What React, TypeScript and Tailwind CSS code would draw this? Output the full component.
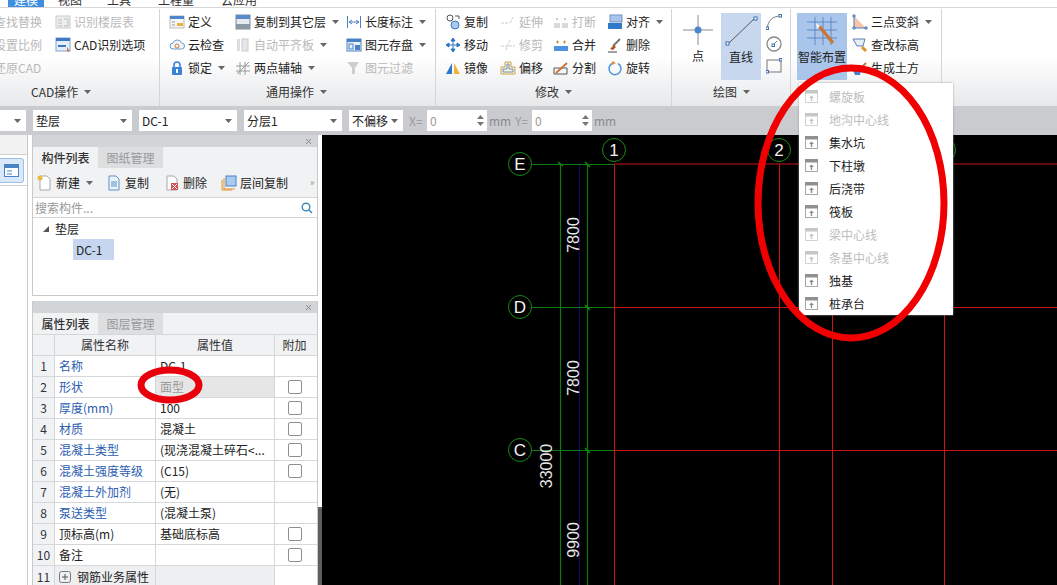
import React from 'react';

const Caret = ({ className = '' }: { className?: string }) => (
  <svg width="7" height="4" viewBox="0 0 7 4" className={`shrink-0 ${className}`}>
    <path d="M0 0h7L3.5 4z" fill="#666" />
  </svg>
);

const s16 = (children: React.ReactNode) => (
  <svg width="16" height="16" viewBox="0 0 16 16" fill="none">
    {children}
  </svg>
);

const icons: Record<string, React.ReactNode> = {
  blank: s16(<rect x="1" y="2" width="13" height="12" fill="#ddd" stroke="#ccc" />),
  layerTable: s16(<><rect x="1" y="2" width="14" height="12" fill="#eee" stroke="#ccc" /><path d="M3 6h4M3 9h4M3 12h4M9 5h4v7H9" stroke="#bbb" /></>),
  cadOption: s16(<><rect x="1" y="1" width="14" height="13" fill="#e4eef9" stroke="#7fa6d6" /><rect x="1" y="1" width="14" height="3" fill="#3f78c0" /><path d="M3 9h8" stroke="#3f78c0" strokeWidth="2" /><path d="M12 10l3 5-3-1z" fill="#e2622a" /></>),
  define: s16(<><rect x="1" y="2" width="14" height="12" fill="#f6f6f6" stroke="#b8b8b8" /><rect x="1" y="2" width="14" height="3" fill="#4e86cc" /><path d="M8 9h6v3H8z" fill="#e8b23c" /><path d="M3 8h3M3 11h3" stroke="#999" /></>),
  cloud: s16(<><path d="M4 12a3 3 0 0 1 0-6 4.5 4.5 0 0 1 8.500 0 3 3 0 0 1 0 6z" fill="#eef5fc" stroke="#6b9bd2" /><circle cx="8" cy="9" r="2" stroke="#e0792a" /></>),
  lock: s16(<><path d="M5 8V5a3 3 0 0 1 6 0v3" stroke="#3a82d8" strokeWidth="1.600" /><rect x="3" y="7" width="10" height="8" rx="1" fill="#3a82d8" /><rect x="7" y="9" width="2" height="4" fill="#fff" /></>),
  copyLayer: s16(<><rect x="1" y="1" width="14" height="14" fill="#e6e9ee" stroke="#7d8a9a" /><rect x="1" y="1" width="14" height="4" fill="#5a8bc8" /><rect x="1" y="10" width="14" height="5" fill="#8c97a6" /></>),
  alignAuto: s16(<><rect x="2" y="2" width="3" height="12" fill="#ddd" /><rect x="7" y="2" width="6" height="12" fill="#e6e6e6" stroke="#ccc" /></>),
  twoPoint: s16(<path d="M2 14L14 2M5 2v13M10 2v13M1 6h14M1 11h14" stroke="#999" />),
  length: s16(<path d="M1.500 2v12M14.500 2v12M3 8h10M3 8l3-2M3 8l3 2M13 8l-3-2M13 8l-3 2" stroke="#4a7fc0" />),
  save: s16(<><rect x="1" y="2" width="14" height="12" fill="#e8f0fa" stroke="#4a82c6" /><rect x="1" y="2" width="14" height="3" fill="#4a82c6" /><rect x="3" y="7" width="4" height="5" stroke="#4a82c6" /><rect x="9" y="8" width="5" height="5" fill="#4a82c6" /></>),
  filter: s16(<path d="M1 2h12L9 8v6H6V8z" fill="#cfcfcf" />),
  copy: s16(<><circle cx="5" cy="4" r="3" stroke="#555" /><circle cx="10" cy="11" r="4" fill="#a9cbef" stroke="#3f78c0" /><path d="M10 2h4v3" stroke="#555" /></>),
  extend: s16(<path d="M1 9h7M10 9l3-6" stroke="#ccc" strokeDasharray="3 1" />),
  move: s16(<path d="M8 1v14M1 8h14M8 1L6 4h4zM8 15l-2-3h4zM1 8l3-2v4zM15 8l-3-2v4z" stroke="#2c74c4" fill="#2c74c4" />),
  trim: s16(<path d="M1 9h14M10 3l-4 10" stroke="#ccc" strokeDasharray="3 1" />),
  mirror: s16(<><path d="M7 3v11H1z" fill="#2f79c9" /><path d="M9 3v11h6z" fill="#efb53a" /></>),
  offset: s16(<><path d="M5 2h6v5h4v7H1V7h4z" fill="#fbf3d8" stroke="#c9a44a" /><path d="M7 4h2v5h4v3H3V9h4z" stroke="#6f8fc0" /></>),
  breakIcon: s16(<><rect x="1" y="9" width="6" height="5" fill="#d8d8d8" /><rect x="9" y="9" width="6" height="5" fill="#d8d8d8" /><path d="M3 5h2M4 4v2M11 5h2M12 4v2" stroke="#bbb" /></>),
  merge: s16(<><rect x="1" y="9" width="14" height="5" fill="#4d93dd" /><path d="M3 5h3M4.500 3.500v3M10 5h3M11.500 3.500v3" stroke="#b8962c" /></>),
  split: s16(<><path d="M1 14V8h13v6z" stroke="#555" /><path d="M3 13L14 3" stroke="#c9763a" strokeWidth="2" /></>),
  align: s16(<><rect x="3" y="1" width="12" height="7" fill="#a9c6ea" stroke="#6f93c2" /><rect x="1" y="9" width="14" height="6" fill="#2f79c9" /></>),
  eraser: s16(<><path d="M13 2L6 9" stroke="#777" strokeWidth="2" /><path d="M7 8l2 2-3 3-3-1z" fill="#b5562a" /><path d="M1 15h9" stroke="#444" /></>),
  rotate: s16(<><path d="M11 3.500a6 6 0 1 1-6 0" stroke="#4e93dc" strokeWidth="1.500" /><path d="M5 1l4 2-4 2z" fill="#e88c2c" /></>),
  slope: s16(<><path d="M2 2v12h12z" fill="#f6c6a6" /><path d="M2 2v12h12" stroke="#4a7fc0" /><path d="M1 1h2v2H1zM1 13h2v2H1zM13 13h2v2h-2z" fill="#fff" stroke="#3f6fb0" /></>),
  elevation: s16(<><path d="M1 2h12l-2 7H5z" fill="#e6eef8" stroke="#5a7fae" /><path d="M10 10l4 4" stroke="#e0912c" strokeWidth="3" /></>),
  soil: s16(<><path d="M3 14L14 3" stroke="#c9763a" strokeWidth="2" /><path d="M1 10h8l-1 5H3z" fill="#4e7fc6" /></>),
  fresh: s16(<><path d="M3 1h7l3 3v11H3z" fill="#fff" stroke="#a9a9a9" /><circle cx="3" cy="3" r="2.500" fill="#eeb93a" /></>),
  doc: s16(<><path d="M3 1h7l3 3v11H3z" fill="#eaf2fb" stroke="#5f8fc6" /><path d="M5 7h6M5 9h6M5 11h6" stroke="#5f8fc6" /></>),
  del: s16(<><path d="M3 1h7l3 3v11H3z" fill="#fff" stroke="#a9a9a9" /><rect x="7" y="8" width="7" height="7" fill="#d45050" /><path d="M8 9l5 5M13 9l-5 5" stroke="#fff" /></>),
  layerCopy: s16(<><rect x="5" y="1" width="10" height="10" fill="#a9cbef" stroke="#4a82c6" /><path d="M3 3v11h11M1 5v10h10" stroke="#e0912c" /></>),
};

const Tool = ({ icon, label, muted, caret, w, gap = 19 }: { icon: string; label: string; muted?: boolean; caret?: boolean; w: number; gap?: number }) => (
  <div className="flex h-[23px] items-center whitespace-nowrap" style={{ width: w }}>
    <span className="flex shrink-0" style={{ width: gap }}>{icons[icon]}</span>
    <span className={muted ? 'text-[#b9b9b9]' : 'text-[#222]'}>{label}</span>
    {caret && <Caret className="ml-[6px]" />}
  </div>
);

const Group = ({ label, width, children, labelClass }: { label: string; width: number; children: React.ReactNode; labelClass: string }) => (
  <div className="flex h-full shrink-0 flex-col border-r border-[#d3d5d7]" style={{ width }}>
    <div className="flex h-[73px] pt-[1px]">{children}</div>
    <div className={`flex h-[19px] items-center gap-[6px] whitespace-nowrap text-[#333] ${labelClass}`}>
      {label}
      <Caret />
    </div>
  </div>
);

const SelectBox = ({ text, w, className = '' }: { text: string; w: number; className?: string }) => (
  <div className={`flex h-[21px] shrink-0 items-center justify-between bg-white pl-[3px] pr-[5px] text-[#222] ${className}`} style={{ width: w }}>
    <span>{text}</span>
    <Caret />
  </div>
);

const NumberBox = () => (
  <div className="flex h-[21px] w-[60px] shrink-0 items-center justify-between bg-white pl-[3px] pr-[3px] text-[#999]">
    <span>0</span>
    <svg width="7" height="13" viewBox="0 0 7 13"><path d="M0 5l3.500-4L7 5zM0 8l3.500 4L7 8z" fill="#777" /></svg>
  </div>
);

const PanelHead = () => (
  <div className="flex h-[12px] items-center justify-end bg-[#d2d5d8] pr-[5px]">
    <svg width="7" height="7" viewBox="0 0 7 7"><path d="M1 1l5 5M6 1L1 6" stroke="#8a8a8a" /></svg>
  </div>
);

const PanelTabs = ({ a, b }: { a: string; b: string }) => (
  <div className="flex h-[21px] bg-[#f1f2f3]">
    <div className="flex w-[65px] items-center justify-center font-medium text-[#333]">{a}</div>
    <div className="flex w-[65px] items-center justify-center bg-[#dcdee0] text-[#999]">{b}</div>
  </div>
);

const rows: { name: string; value: string; blue?: boolean; check?: boolean; grey?: boolean }[] = [
  { name: '名称', value: 'DC-1', blue: true },
  { name: '形状', value: '面型', blue: true, check: true, grey: true },
  { name: '厚度(mm)', value: '100', blue: true, check: true },
  { name: '材质', value: '混凝土', blue: true, check: true },
  { name: '混凝土类型', value: '(现浇混凝土碎石<...', blue: true, check: true },
  { name: '混凝土强度等级', value: '(C15)', blue: true, check: true },
  { name: '混凝土外加剂', value: '(无)', blue: true },
  { name: '泵送类型', value: '(混凝土泵)', blue: true },
  { name: '顶标高(m)', value: '基础底标高', check: true },
  { name: '备注', value: '', check: true },
];

const menu: [string, boolean][] = [
  ['螺旋板', true],
  ['地沟中心线', true],
  ['集水坑', false],
  ['下柱墩', false],
  ['后浇带', false],
  ['筏板', false],
  ['梁中心线', true],
  ['条基中心线', true],
  ['独基', false],
  ['桩承台', false],
];

const MenuIcon = ({ muted }: { muted: boolean }) => (
  <svg width="13" height="13" viewBox="0 0 13 13" className="shrink-0" opacity={muted ? 0.5 : 1}>
    <rect x="0.500" y="0.500" width="12" height="12" fill="#fff" stroke="#a8a8a8" />
    <rect x="0" y="0" width="13" height="3.500" fill="#909090" />
    <path d="M6.500 5.500l2.500 2.500H7.200v3H5.800V8H4z" fill="#8a8a8a" />
  </svg>
);

const Grid = ({ x, y, t }: { x: number; y: number; t: string }) => (
  <g>
    <circle cx={x} cy={y} r="11.500" fill="#000" stroke="#1d8a1d" />
    <text x={x} y={y + 6} textAnchor="middle" fontSize="17" fill="#f2f2f2" fontFamily="Liberation Sans, sans-serif">{t}</text>
  </g>
);

const Dim = ({ x, y, t }: { x: number; y: number; t: string }) => (
  <text transform={`translate(${x} ${y}) rotate(-90)`} textAnchor="middle" fontSize="16" fill="#e8e8e8" fontFamily="Liberation Sans, sans-serif">{t}</text>
);

const Canvas = () => (
  <svg viewBox="322 135 735 450" width="735" height="450" className="block">
    <rect x="322" y="135" width="735" height="450" fill="#000" />
    <path d="M579.500 165V585" stroke="#0a0a70" />
    <path d="M560.500 164V585M587.500 164V585" stroke="#0f7a0f" strokeWidth="1.200" />
    <path d="M532 164.500H614M532 307.500H614M532 450.500H614" stroke="#0f7a0f" />
    <path d="M585 162l5 5M585 305l5 5M585 448l5 5M558 162l5 4" stroke="#0f8a0f" strokeWidth="1.500" />
    <path d="M614.500 164H1057M614 307.500H1057M614 450.500H1057" stroke="#c81414" />
    <path d="M614.500 164V585M779.500 164V585M832.500 164V585M944.500 164V585" stroke="#c81414" />
    <Grid x={520} y={164} t="E" />
    <Grid x={520} y={307} t="D" />
    <Grid x={520} y={450} t="C" />
    <Grid x={614} y={150} t="1" />
    <Grid x={779} y={150} t="2" />
    <Grid x={944} y={150} t="3" />
    <Dim x={579} y={235} t="7800" />
    <Dim x={579} y={378} t="7800" />
    <Dim x={552} y={466} t="33000" />
    <Dim x={579} y={540} t="9900" />
  </svg>
);

export default function App() {
  return (
    <div className="relative flex h-[585px] w-[1057px] flex-col overflow-hidden bg-white font-['Noto_Sans_CJK_SC','Liberation_Sans',sans-serif] text-[12px] leading-none">
      {/* tabs, cut off by the top of the shot */}
      <div className="flex h-[8px] shrink-0 items-end overflow-hidden border-b border-[#d8d8d8] bg-white text-[#333]">
        <div className="ml-[8px] flex h-[8px] w-[36px] items-end justify-center bg-[#3f8fe0] pb-[1px] text-white">建模</div>
        <span className="ml-[14px] pb-[1px]">视图</span>
        <span className="ml-[25px] pb-[1px]">工具</span>
        <span className="ml-[27px] pb-[1px]">工程量</span>
        <span className="ml-[27px] pb-[1px]">云应用</span>
      </div>

      {/* ribbon */}
      <div className="flex h-[98px] shrink-0 bg-gradient-to-b from-white via-white to-[#e6e8ea] pt-[1px] shadow-[0_1px_1px_#8e9194]">
        <Group label="CAD操作" width={160} labelClass="pl-[31px]">
          <div className="-ml-[25px] w-[80px]">
            <Tool icon="blank" label="查找替换" muted w={80} />
            <Tool icon="blank" label="设置比例" muted w={80} />
            <Tool icon="blank" label="还原CAD" muted w={80} />
          </div>
          <div>
            <Tool icon="layerTable" label="识别楼层表" muted w={100} />
            <Tool icon="cadOption" label="CAD识别选项" w={100} />
          </div>
        </Group>
        <Group label="通用操作" width={276} labelClass="pl-[106px]">
          <div className="ml-[9px] w-[66px]">
            <Tool icon="define" label="定义" w={66} />
            <Tool icon="cloud" label="云检查" w={66} />
            <Tool icon="lock" label="锁定" caret w={66} />
          </div>
          <div className="w-[111px]">
            <Tool icon="copyLayer" label="复制到其它层" caret w={111} />
            <Tool icon="alignAuto" label="自动平齐板" muted caret w={111} />
            <Tool icon="twoPoint" label="两点辅轴" caret w={111} />
          </div>
          <div>
            <Tool icon="length" label="长度标注" caret w={85} />
            <Tool icon="save" label="图元存盘" caret w={85} />
            <Tool icon="filter" label="图元过滤" muted w={85} />
          </div>
        </Group>
        <Group label="修改" width={236} labelClass="pl-[99px]">
          <div className="ml-[9px] w-[55px]">
            <Tool icon="copy" label="复制" w={55} />
            <Tool icon="move" label="移动" w={55} />
            <Tool icon="mirror" label="镜像" w={55} />
          </div>
          <div className="w-[53px]">
            <Tool icon="extend" label="延伸" muted w={53} />
            <Tool icon="trim" label="修剪" muted w={53} />
            <Tool icon="offset" label="偏移" w={53} />
          </div>
          <div className="w-[54px]">
            <Tool icon="breakIcon" label="打断" muted w={54} />
            <Tool icon="merge" label="合并" w={54} />
            <Tool icon="split" label="分割" w={54} />
          </div>
          <div>
            <Tool icon="align" label="对齐" caret w={60} />
            <Tool icon="eraser" label="删除" w={60} />
            <Tool icon="rotate" label="旋转" w={60} />
          </div>
        </Group>
        <Group label="绘图" width={119} labelClass="pl-[41px]">
          <div className="ml-[11px] mt-[3px] flex h-[67px] w-[30px] flex-col items-center pt-[2px]">
            <svg width="30" height="30" viewBox="0 0 30 30">
              <path d="M15 0v30M0 15h30" stroke="#8a8a8a" />
              <circle cx="15" cy="15" r="3.500" fill="#4a86d0" />
            </svg>
            <span className="mt-[5px] text-[#222]">点</span>
          </div>
          <div className="ml-[8px] mt-[3px] flex h-[67px] w-[40px] flex-col items-center bg-[#c7d8ee] pt-[2px]">
            <svg width="34" height="34" viewBox="0 0 34 34">
              <path d="M4 29L31 3" stroke="#555" />
              <rect x="2" y="27" width="3" height="3" fill="#fff" stroke="#3f6fb0" />
              <rect x="30" y="2" width="3" height="3" fill="#fff" stroke="#3f6fb0" />
            </svg>
            <span className="mt-[2px] text-[#222]">直线</span>
          </div>
          <div className="ml-[5px] mt-[3px] flex w-[16px] flex-col gap-[6px] pt-[1px]">
            <svg width="16" height="16" viewBox="0 0 16 16" fill="none"><path d="M1 15C2 7 6 2 15 2" stroke="#777" /><rect x="0" y="13" width="2.500" height="2.500" fill="#fff" stroke="#3f6fb0" /><rect x="13" y="0.500" width="2.500" height="2.500" fill="#fff" stroke="#3f6fb0" /></svg>
            <svg width="16" height="16" viewBox="0 0 16 16" fill="none"><circle cx="8" cy="8" r="7" stroke="#888" strokeWidth="1.300" /><path d="M7 9l4-4" stroke="#777" /><rect x="6" y="8" width="2.500" height="2.500" fill="#fff" stroke="#3f6fb0" /></svg>
            <svg width="16" height="16" viewBox="0 0 16 16" fill="none"><rect x="1" y="2" width="14" height="12" stroke="#777" /><rect x="0" y="12.500" width="2.500" height="2.500" fill="#fff" stroke="#3f6fb0" /><rect x="13.500" y="0.500" width="2.500" height="2.500" fill="#fff" stroke="#3f6fb0" /></svg>
          </div>
        </Group>
        <Group label="" width={151} labelClass="hidden">
          <div className="ml-[6px] mt-[3px] flex h-[67px] w-[50px] flex-col items-center bg-[#a9c6ea] pt-[3px]">
            <svg width="34" height="34" viewBox="0 0 34 34" fill="none">
              <path d="M2 6h30M2 14h30M2 22h30M10 1v28M18 1v28M26 1v28" stroke="#4a7fc0" strokeWidth="0.800" />
              <path d="M14 10l14 17" stroke="#c9763a" strokeWidth="3.500" />
              <path d="M11 7l4 3-3 3z" fill="#f4f4f4" />
            </svg>
            <span className="mt-[1px] whitespace-nowrap text-[#222]">智能布置</span>
          </div>
          <div className="ml-[5px]">
            <Tool icon="slope" label="三点变斜" caret w={88} />
            <Tool icon="elevation" label="查改标高" w={88} />
            <Tool icon="soil" label="生成土方" w={88} />
          </div>
        </Group>
      </div>

      {/* layer / offset bar */}
      <div className="flex h-[29px] shrink-0 items-center bg-[#c9cbce] text-[#222]">
        <SelectBox text="" w={26} />
        <SelectBox text="垫层" w={99} className="ml-[7px]" />
        <SelectBox text="DC-1" w={98} className="ml-[7px]" />
        <SelectBox text="分层1" w={98} className="ml-[7px]" />
        <SelectBox text="不偏移" w={54} className="ml-[7px]" />
        <span className="ml-[6px] w-[18px] text-[#9a9a9a]">X=</span>
        <NumberBox />
        <span className="ml-[2px] w-[26px] text-[#8a8a8a]">mm</span>
        <span className="w-[17px] text-[#9a9a9a]">Y=</span>
        <NumberBox />
        <span className="ml-[2px] text-[#8a8a8a]">mm</span>
      </div>

      {/* body */}
      <div className="flex min-h-0 flex-1">
        <div className="w-[28px] shrink-0 border-r border-[#c8c8c8]">
          <div className="h-[20px] border-b border-[#d0d0d0] bg-[#f2f2f2]" />
          <div className="mt-[3px] flex h-[25px] w-[24px] items-center justify-center rounded-r-[3px] border border-l-0 border-[#9cc1e6] bg-[#d9e9f9]">
            <svg width="15" height="13" viewBox="0 0 15 13">
              <rect x="0.500" y="0.500" width="14" height="12" fill="#fff" stroke="#4a82c6" />
              <rect x="0" y="0" width="15" height="4" fill="#4a82c6" />
              <path d="M3 7h5M3 10h5" stroke="#4a82c6" />
            </svg>
          </div>
          <div className="mt-[2px] border-t border-[#d0d0d0]" />
        </div>
        <div className="relative w-[294px] shrink-0 pl-[4px] pr-[4px]">
          <div className="flex h-[161px] flex-col border-b border-x border-[#c9c9c9]">
            <PanelHead />
            <PanelTabs a="构件列表" b="图纸管理" />
            <div className="flex h-[30px] items-center whitespace-nowrap border-b border-[#d5d5d5] bg-[#f1f2f3] pl-[4px] text-[#333]">
              <Tool icon="fresh" label="新建" caret w={69} />
              <Tool icon="doc" label="复制" w={58} />
              <Tool icon="del" label="删除" w={57} />
              <Tool icon="layerCopy" label="层间复制" w={89} />
              <span className="text-[9px] text-[#888]">»</span>
            </div>
            <div className="flex h-[20px] items-center justify-between border-b border-[#d5d5d5] pl-[2px] pr-[4px] text-[#999]">
              搜索构件...
              <svg width="12" height="12" viewBox="0 0 12 12" fill="none"><circle cx="5" cy="5" r="3.800" stroke="#3f88b8" strokeWidth="1.400" /><path d="M8 8l3 3" stroke="#3f88b8" strokeWidth="1.600" /></svg>
            </div>
            <div className="pl-[10px] pt-[5px] text-[#222]">
              <div className="flex h-[12px] items-center gap-[6px]">
                <svg width="6" height="6" viewBox="0 0 6 6"><path d="M6 0v6H0z" fill="#555" /></svg>
                垫层
              </div>
              <div className="ml-[30px] mt-[4px] flex h-[21px] w-[41px] items-center bg-[#c6d6ee] pl-[3px]">DC-1</div>
            </div>
          </div>
          <div className="mt-[5px] flex flex-col border-x border-[#c9c9c9]">
            <PanelHead />
            <PanelTabs a="属性列表" b="图层管理" />
            <div className="flex h-[22px] border-y border-[#d5d8da] bg-[#f1f2f3] text-[#333]">
              <div className="w-[22px] border-r border-[#d5d8da]" />
              <div className="flex w-[101px] items-center justify-center border-r border-[#d5d8da]">属性名称</div>
              <div className="flex w-[119px] items-center justify-center border-r border-[#d5d8da]">属性值</div>
              <div className="flex w-[39px] items-center justify-center">附加</div>
            </div>
            {rows.map((r, i) => (
              <div key={r.name} className="flex h-[21px] shrink-0 border-b border-[#d5d8da]">
                <div className="flex w-[22px] items-center justify-center border-r border-[#d5d8da] bg-[#f1f2f3] text-[#333]">{i + 1}</div>
                <div className={`flex w-[101px] items-center border-r border-[#d5d8da] pl-[4px] ${r.blue ? 'text-[#2a5db0]' : 'text-[#222]'}`}>{r.name}</div>
                <div className={`flex w-[119px] items-center whitespace-nowrap border-r border-[#d5d8da] pl-[4px] ${r.grey ? 'bg-[#e6e6e6] text-[#999]' : 'text-[#222]'}`}>{r.value}</div>
                <div className="flex w-[39px] items-center justify-center">
                  {r.check && <div className="h-[14px] w-[14px] rounded-[2px] border border-[#8f8f8f] bg-white" />}
                </div>
              </div>
            ))}
            <div className="flex h-[21px] shrink-0">
              <div className="flex w-[22px] items-center justify-center border-r border-[#d5d8da] bg-[#f1f2f3] text-[#333]">11</div>
              <div className="flex w-[101px] items-center gap-[6px] border-r border-[#d5d8da] bg-[#eeeff0] pl-[4px] text-[#222]">
                <svg width="12" height="12" viewBox="0 0 12 12" fill="none"><rect x="0.500" y="0.500" width="11" height="11" rx="2" stroke="#777" /><path d="M3 6h6M6 3v6" stroke="#555" /></svg>
                钢筋业务属性
              </div>
              <div className="w-[119px] border-r border-[#d5d8da] bg-[#eeeff0]" />
            </div>
          </div>
          <div className="absolute bottom-0 right-0 h-[78px] w-[4px] bg-[#5c5f62]" />
        </div>
        <Canvas />
      </div>

      {/* dropdown of 智能布置 */}
      <div className="absolute left-[799px] top-[83px] flex w-[154px] flex-col bg-white pt-[2px] shadow-[0_0_2px_#9a9a9a]">
        {menu.map(([t, muted]) => (
          <div key={t} className="flex h-[23px] items-center pl-[6px]">
            <MenuIcon muted={muted} />
            <span className={`ml-[11px] ${muted ? 'text-[#bdbdbd]' : 'text-[#222]'}`}>{t}</span>
          </div>
        ))}
      </div>

      {/* red marker annotations on top of the shot */}
      <svg className="pointer-events-none absolute left-0 top-0" width="1057" height="585" fill="none">
        <ellipse cx="851" cy="203" rx="93" ry="135" stroke="#f00000" strokeWidth="7" />
        <ellipse cx="170" cy="385" rx="29" ry="15" stroke="#e8000c" strokeWidth="7" />
      </svg>
    </div>
  );
}
